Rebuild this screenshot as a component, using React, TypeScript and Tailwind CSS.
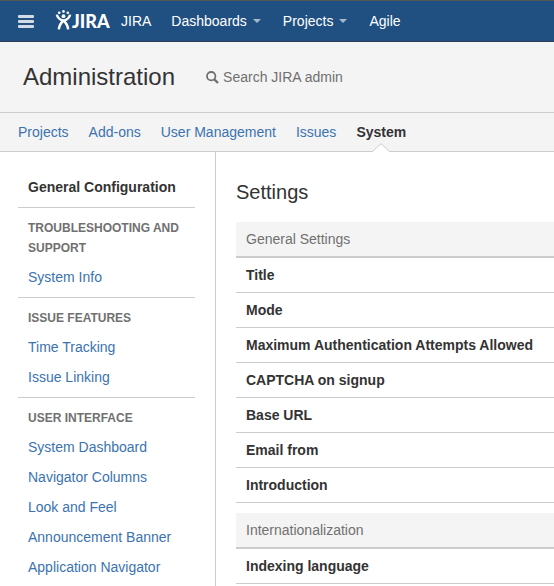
type NavItem = { label: string; current?: boolean; menu?: boolean };

const mainNav: NavItem[] = [
  { label: "JIRA" },
  { label: "Dashboards", menu: true },
  { label: "Projects", menu: true },
  { label: "Agile" },
];

const adminTabs: NavItem[] = [
  { label: "Projects" },
  { label: "Add-ons" },
  { label: "User Management" },
  { label: "Issues" },
  { label: "System", current: true },
];

const sideSections = [
  { title: "Troubleshooting and Support", links: ["System Info"] },
  { title: "Issue Features", links: ["Time Tracking", "Issue Linking"] },
  {
    title: "User Interface",
    links: [
      "System Dashboard",
      "Navigator Columns",
      "Look and Feel",
      "Announcement Banner",
      "Application Navigator",
    ],
  },
];

const settingGroups = [
  {
    title: "General Settings",
    rows: [
      "Title",
      "Mode",
      "Maximum Authentication Attempts Allowed",
      "CAPTCHA on signup",
      "Base URL",
      "Email from",
      "Introduction",
    ],
  },
  { title: "Internationalization", rows: ["Indexing language"] },
];

function Logo() {
  return (
    <a href="#" aria-label="JIRA home" className="ml-[21px] flex w-14 items-center text-white">
      <svg className="shrink-0" width="17" height="22" viewBox="0 0 17 22" fill="none" stroke="currentColor" aria-hidden="true">
        <g fill="currentColor" stroke="none">
          <circle cx="4.2" cy="2.8" r="1.3" />
          <circle cx="8.5" cy="1.4" r="1.3" />
          <circle cx="12.8" cy="2.8" r="1.3" />
          <circle cx="8.5" cy="6.2" r="1.9" />
        </g>
        <path d="M1.9 4.600c.6 3.400 2.700 5 6.600 6.200 2.600 1.900 4.100 4.700 4.700 8.600" strokeWidth="2.500" />
        <path d="M15.100 4.600c-.6 3.400-2.700 5-6.600 6.200-2.600 1.900-4.100 4.700-4.700 8.600" strokeWidth="2.500" />
      </svg>
      <span className="font-['Lato',sans-serif] text-lg leading-5 font-black">JIRA</span>
    </a>
  );
}

function Header() {
  return (
    <header className="flex h-[42px] items-center border-t border-b border-t-[#555] border-b-[#2e3d54] bg-[#205081] pl-[18px]">
      <button type="button" aria-label="Menu" className="flex flex-col gap-[2px]">
        <span className="h-[3px] w-4 rounded-[1px] bg-[#d2dce6]" />
        <span className="h-[3px] w-4 rounded-[1px] bg-[#d2dce6]" />
        <span className="h-[3px] w-4 rounded-[1px] bg-[#d2dce6]" />
      </button>
      <Logo />
      <nav aria-label="Main" className="flex text-white">
        {mainNav.map((item) =>
          item.menu ? (
            <button key={item.label} type="button" className="flex items-center gap-[6px] px-[10px]">
              {item.label}
              <span className="mr-[2px] border-x-4 border-t-4 border-x-transparent border-t-[#a6b9cd]" />
            </button>
          ) : (
            <a key={item.label} href="#" className="px-[10px]">
              {item.label}
            </a>
          ),
        )}
      </nav>
    </header>
  );
}

function AdminBar() {
  return (
    <div className="flex h-[71px] items-center border-b border-[#ccc] pl-[23px]">
      <h1 className="text-2xl leading-7">Administration</h1>
      <label className="ml-[31px] flex grow items-center gap-1 text-[#707070]">
        <svg className="shrink-0" width="13" height="13" viewBox="0 0 13 13" fill="none" stroke="currentColor" strokeWidth="1.800" role="img" aria-label="Search">
          <circle cx="5.200" cy="5.200" r="4.200" />
          <path d="M8.300 8.300l3.700 3.700" strokeWidth="2.400" />
        </svg>
        <input
          type="search"
          placeholder="Search JIRA admin"
          className="w-full bg-transparent outline-none placeholder:text-[#707070]"
        />
      </label>
    </div>
  );
}

function AdminTabs() {
  return (
    <nav aria-label="Administration" className="flex gap-5 border-b border-[#ccc] px-[18px]">
      {adminTabs.map((tab) =>
        tab.current ? (
          <a key={tab.label} href="#" aria-current="page" className="relative py-[9px] font-bold">
            {tab.label}
            <svg className="absolute -bottom-px left-1/2 -translate-x-1/2" width="18" height="9" viewBox="0 0 18 9" aria-hidden="true">
              <path d="M.5 8.500h.5L9 .700l8 7.800h.5V9H.5z" fill="#fff" />
              <path d="M.5 8.500L9 .700l8.500 7.800" fill="none" stroke="#ccc" />
            </svg>
          </a>
        ) : (
          <a key={tab.label} href="#" className="py-[9px] text-[#3b73af]">
            {tab.label}
          </a>
        ),
      )}
    </nav>
  );
}

function Sidebar() {
  return (
    <aside className="w-[216px] shrink-0 border-r border-[#ccc] pt-5 pr-5 pl-[18px]">
      <a href="#" aria-current="page" className="mb-[5px] block px-[10px] py-[5px] font-bold">
        General Configuration
      </a>
      {sideSections.map((section) => (
        <section key={section.title} className="border-t border-[#ccc] pt-[10px] pb-[5px]">
          <h2 className="mb-1 px-[10px] text-xs leading-5 font-bold text-[#707070] uppercase">{section.title}</h2>
          <ul>
            {section.links.map((link) => (
              <li key={link}>
                <a href="#" className="block px-[10px] py-[5px] text-[#3b73af]">
                  {link}
                </a>
              </li>
            ))}
          </ul>
        </section>
      ))}
    </aside>
  );
}

function Settings() {
  return (
    <main className="grow pt-7 pl-5">
      <h2 className="mb-[18px] text-xl leading-6">Settings</h2>
      <div className="flex flex-col gap-[10px]">
        {settingGroups.map((group) => (
          <table key={group.title} className="w-full border-separate border-spacing-0 text-left">
            <thead>
              <tr>
                <th scope="col" className="border-b-2 border-[#ccc] bg-[#f4f4f4] px-[10px] py-[7px] font-normal text-[#707070]">
                  {group.title}
                </th>
              </tr>
            </thead>
            <tbody>
              {group.rows.map((row) => (
                <tr key={row}>
                  <th scope="row" className="border-b border-[#ccc] px-[10px] py-[7px] font-bold">
                    {row}
                  </th>
                </tr>
              ))}
            </tbody>
          </table>
        ))}
      </div>
    </main>
  );
}

export default function App() {
  return (
    <div className="flex min-h-screen flex-col bg-white font-['Liberation_Sans',Arial,sans-serif] text-sm leading-5 text-[#333]">
      <Header />
      <div className="bg-[#f4f4f4]">
        <AdminBar />
        <AdminTabs />
      </div>
      <div className="flex grow">
        <Sidebar />
        <Settings />
      </div>
    </div>
  );
}
